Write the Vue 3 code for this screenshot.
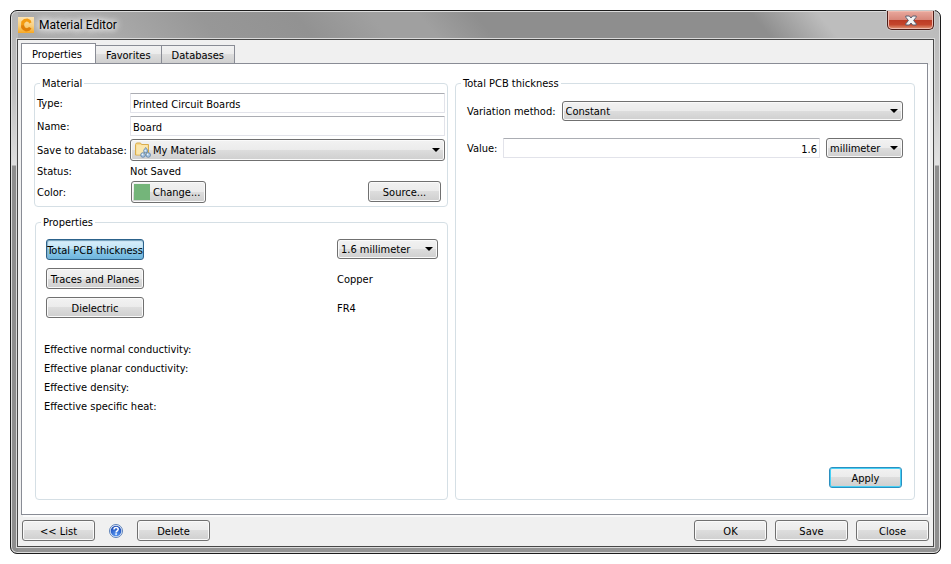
<script setup>
import { ref } from 'vue'

const tabs = ['Properties', 'Favorites', 'Databases']
const activeTab = ref('Properties')

const type = ref('Printed Circuit Boards')
const name = ref('Board')
const database = ref('My Materials')
const method = ref('Constant')
const value = ref('1.6')
const unit = ref('millimeter')
const thickness = ref('1.6 millimeter')

const selected = ref('Total PCB thickness')
const layers = [
  { label: 'Total PCB thickness', text: '' },
  { label: 'Traces and Planes', text: 'Copper' },
  { label: 'Dielectric', text: 'FR4' },
]
const results = [
  'Effective normal conductivity:',
  'Effective planar conductivity:',
  'Effective density:',
  'Effective specific heat:',
]
</script>

<template>
  <div class="desktop">
    <main class="window">
      <header class="titlebar">
        <svg class="app-icon" viewBox="0 0 16 16" aria-hidden="true">
          <defs>
            <linearGradient id="appBg" x1="0" y1="0" x2="0" y2="1">
              <stop offset="0" stop-color="#fbe3b4" />
              <stop offset="0.55" stop-color="#f9cf7c" />
              <stop offset="1" stop-color="#f7a823" />
            </linearGradient>
          </defs>
          <rect width="16" height="16" fill="url(#appBg)" />
          <path d="M13.500 5.500 12.500 3 9.500 1.500 6 2 3.300 4.500 3 9l3-.5L6.500 6l2-1.500L10.500 5l.5 1.500z" fill="#f39a10" />
          <path d="M3 8.500 6 8l1 2.500 2 .8 2.200-1.300 2.300 1.500-2 2.200-3.500.8L5 13 3.200 11z" fill="#e07f08" />
        </svg>
        <h1 class="title">Material Editor</h1>
        <button class="close" type="button" aria-label="Close window">
          <svg viewBox="0 0 12 11" width="12" height="11" aria-hidden="true">
            <path d="M.8 1h3.600L6 3l1.600-2h3.600v1.200L8.600 5.500l2.600 3.300V10H7.600L6 8l-1.600 2H.8V8.800l2.600-3.300L.8 2.200z" fill="#f4f4f4" stroke="#5b5f70" />
          </svg>
        </button>
      </header>

      <div class="client">
        <nav class="tabs" role="tablist">
          <button
            v-for="tab in tabs"
            :key="tab"
            type="button"
            role="tab"
            class="tab"
            :class="{ active: tab === activeTab }"
            :aria-selected="tab === activeTab"
            @click="activeTab = tab"
          >{{ tab }}</button>
        </nav>

        <section class="pane">
          <div class="left">
            <fieldset class="group material">
              <legend>Material</legend>
              <label class="text" for="type">Type:</label>
              <input id="type" v-model="type" class="field" type="text" />
              <label class="text" for="name">Name:</label>
              <input id="name" v-model="name" class="field" type="text" />
              <label class="text" for="database">Save to database:</label>
              <div class="combo tall with-icon">
                <select id="database" v-model="database"><option>My Materials</option></select>
                <svg class="folder" viewBox="0 0 16 16" aria-hidden="true">
                  <path d="M.5 13V2.500L1.500 1h4l1 1.500h7v10.500z" fill="#f8d98a" stroke="#d9ac4c" />
                  <path d="M1.500 5h11v7.500h-11z" fill="#fbe7ae" />
                  <path d="M1.500 4h11" stroke="#fff3cf" />
                  <g fill="#a9c6e2" stroke="#5b7fa6" stroke-width=".8">
                    <path d="M10.700 5.500c1 1.500 2 2.300 2 3.400a2 2 0 0 1-4 0c0-1.100 1-1.900 2-3.400z" />
                    <circle cx="8" cy="13" r="2.300" />
                    <circle cx="13.200" cy="13" r="2.300" />
                  </g>
                  <g fill="#eef6fd">
                    <circle cx="10.200" cy="8.800" r=".8" />
                    <circle cx="7.400" cy="12.400" r=".8" />
                    <circle cx="12.600" cy="12.400" r=".8" />
                  </g>
                </svg>
                <span class="arrow"></span>
              </div>
              <span class="text">Status:</span>
              <span class="text">Not Saved</span>
              <span class="text">Color:</span>
              <div class="color-row">
                <button class="btn change" type="button"><i class="swatch"></i><span class="text">Change...</span></button>
                <button class="btn" type="button">Source...</button>
              </div>
            </fieldset>

            <fieldset class="group properties">
              <legend>Properties</legend>
              <div class="layers">
                <template v-for="layer in layers" :key="layer.label">
                  <button
                    type="button"
                    class="btn wide"
                    :class="{ pressed: layer.label === selected }"
                    @click="selected = layer.label"
                  >{{ layer.label }}</button>
                  <span v-if="layer.text" class="text">{{ layer.text }}</span>
                  <div v-else class="combo">
                    <select v-model="thickness" aria-label="Thickness"><option>1.6 millimeter</option></select>
                    <span class="arrow"></span>
                  </div>
                </template>
              </div>
              <ul class="results">
                <li v-for="item in results" :key="item">{{ item }}</li>
              </ul>
            </fieldset>
          </div>

          <fieldset class="group detail">
            <legend>Total PCB thickness</legend>
            <div class="detail-body">
              <div class="row">
                <label class="text" for="method">Variation method:</label>
                <div class="combo grow">
                  <select id="method" v-model="method"><option>Constant</option></select>
                  <span class="arrow"></span>
                </div>
              </div>
              <div class="row">
                <label class="text" for="value">Value:</label>
                <input id="value" v-model="value" class="field number" type="text" />
                <div class="combo unit">
                  <select v-model="unit" aria-label="Unit"><option>millimeter</option></select>
                  <span class="arrow"></span>
                </div>
              </div>
              <button class="btn apply" type="button">Apply</button>
            </div>
          </fieldset>
        </section>

        <footer class="footer">
          <button class="btn" type="button">&lt;&lt; List</button>
          <button class="help" type="button" aria-label="Help">
            <svg viewBox="0 0 14 14" width="14" height="14" aria-hidden="true">
              <defs>
                <radialGradient id="helpBg" cx=".5" cy=".85" r=".8">
                  <stop offset="0" stop-color="#5b9bf5" />
                  <stop offset="1" stop-color="#1747b5" />
                </radialGradient>
              </defs>
              <circle cx="7" cy="7" r="6.500" fill="#e8f0fb" stroke="#5c80b8" />
              <circle cx="7" cy="7" r="5.300" fill="url(#helpBg)" />
              <path d="M5 5.600C5 4.200 5.900 3.500 7.100 3.500s2.100.7 2.100 1.800c0 1.500-2.100 1.500-2.100 3.100" fill="none" stroke="#fff" stroke-width="1.500" />
              <rect x="6.300" y="9.300" width="1.600" height="1.500" fill="#fff" />
            </svg>
          </button>
          <button class="btn" type="button">Delete</button>
          <span class="spacer"></span>
          <button class="btn" type="button">OK</button>
          <button class="btn" type="button">Save</button>
          <button class="btn" type="button">Close</button>
        </footer>
      </div>
    </main>
  </div>
</template>

<style>
body {
  background: #fff;
}
</style>

<style scoped>
* {
  box-sizing: border-box;
}

.desktop {
  display: flex;
  min-height: 100vh;
  padding: 10px;
  font: 11px/14px "DejaVu Sans Condensed", Tahoma, sans-serif;
  color: #000;
}

button,
input,
select {
  margin: 0;
  font: inherit;
  color: inherit;
}

.text {
  padding-top: 2px;
}

.window {
  flex: 1;
  display: flex;
  flex-direction: column;
  padding: 0 6px 6px;
  border: 1px solid #1c1c1c;
  border-radius: 7px;
  background:
    linear-gradient(to bottom, #b9b9b9 0, #c4c4c4 80px, #e2e2e2 154px, #8e8e8e 155px, #8e8e8e 100%) right / 7px 100% no-repeat,
    linear-gradient(to bottom, #b4b4b4 0, #c0c0c0 80px, #dedede 154px, #8e8e8e 155px, #8e8e8e 100%) left / 7px 100% no-repeat,
    linear-gradient(50deg, #a8a8a8 0, #b0b0b0 8%, #979797 22%, #929292 32%, #a0a0a0 40%, #a0a0a0 45%, #8e8e8e 51%, #8e8e8e 80%, #bdbdbd 87%, #bdbdbd 100%) top / 100% 30px no-repeat,
    #949494;
  box-shadow: inset 0 0 0 1px #dcdcdc;
}

.titlebar {
  display: flex;
  align-items: flex-start;
  height: 28px;
  padding-left: 1px;
}

.app-icon {
  width: 16px;
  height: 16px;
  margin-top: 6px;
}

.title {
  flex: 1;
  margin: 0 0 0 5px;
  font: 12px/28px Roboto, sans-serif;
  text-shadow: 0 0 6px #fff, 0 0 8px #fff, 0 0 10px #fff;
}

.close {
  display: grid;
  place-items: center;
  width: 47px;
  height: 19px;
  padding: 0;
  border: 1px solid #4b1d18;
  border-top: 0;
  border-radius: 0 0 5px 5px;
  background: linear-gradient(#e9a99e 0, #d8887b 48%, #bb3a24 50%, #c4452c 75%, #e09a7a 100%);
  box-shadow: inset 0 0 0 1px #f0b9ad, 0 0 0 1px #c9c9c9;
}

.client {
  flex: 1;
  display: flex;
  flex-direction: column;
  padding: 3px 5px 5px 3px;
  border: 1px solid #474747;
  background: #f0f0f0;
  box-shadow: 0 0 0 1px #dadada;
}

.tabs {
  display: flex;
  align-items: flex-end;
  height: 20px;
}

.tab {
  height: 18px;
  padding: 2px 10px 0;
  border: 1px solid #898c95;
  border-left-width: 0;
  border-bottom: 0;
  background: linear-gradient(#f2f2f2 0, #ebebeb 50%, #dddddd 50%, #cfcfcf 100%);
}

.tab.active {
  height: 21px;
  margin-bottom: -1px;
  padding: 1px 13px 0 10px;
  border-left-width: 1px;
  background: #fff;
}

.pane {
  flex: 1;
  display: grid;
  grid-template-columns: 414fr 460fr;
  gap: 7px;
  padding: 11px 12px 14px 12px;
  border: 1px solid #898c95;
  background: #fff;
  box-shadow: 2px 2px 0 #fbfbfb;
}

.left {
  display: flex;
  flex-direction: column;
  gap: 7px;
}

.group {
  min-width: 0;
  margin: 0;
  border: 1px solid #d5dfe5;
  border-radius: 4px;
}

legend {
  margin-left: 5px;
  padding: 2px 2px 0;
}

.material {
  display: grid;
  grid-template-columns: 93px 1fr;
  grid-template-rows: 20px 20px 22px 14px 22px;
  align-items: center;
  row-gap: 3px;
  padding: 2px 2px 3px;
}

.material legend {
  margin-left: 3px;
}

.field {
  width: 100%;
  height: 20px;
  padding: 2px 2px 0;
  border: 1px solid #e2e3ea;
  border-top-color: #abadb3;
  border-radius: 1px;
  background: #fff;
  outline: none;
}

.combo {
  display: grid;
  align-items: center;
  height: 20px;
}

.combo.tall {
  height: 22px;
}

.combo > * {
  grid-area: 1 / 1;
}

.combo select {
  width: 100%;
  height: 100%;
  padding: 1px 20px 0 3px;
  appearance: none;
}

.combo.with-icon select {
  padding-left: 22px;
}

.combo select,
.btn {
  border: 1px solid #707070;
  border-radius: 3px;
  background: linear-gradient(#f2f2f2 0, #ebebeb 50%, #dddddd 50%, #cfcfcf 100%);
  box-shadow: inset 0 0 0 1px #fafafa;
}

.folder {
  width: 16px;
  height: 16px;
  margin-left: 5px;
  pointer-events: none;
}

.arrow {
  justify-self: end;
  width: 8px;
  height: 4px;
  margin-right: 5px;
  background: #000;
  clip-path: polygon(0 0, 100% 0, 50% 100%);
  pointer-events: none;
}

.btn {
  width: 73px;
  height: 21px;
  padding: 2px 0 0;
  white-space: nowrap;
}

.btn.wide {
  width: 98px;
}

.btn.pressed {
  border-color: #2c628b;
  background: linear-gradient(#d9effb 0, #c1e4f6 48%, #8fcbea 50%, #6cb4dd 100%);
  box-shadow: inset 0 1px 1px #6f9db8, inset 1px 0 1px #8ab5cd;
}

.color-row {
  display: flex;
  justify-content: space-between;
  padding: 0 4px 0 1px;
}

.btn.change {
  display: flex;
  align-items: center;
  gap: 3px;
  width: 75px;
  height: 22px;
  padding: 0 0 0 2px;
}

.swatch {
  width: 16px;
  height: 16px;
  background: #74b57a;
}

.properties {
  flex: 1;
  margin-left: 1px;
  padding: 9px 9px 0 8px;
}

.properties legend {
  margin-left: -3px;
}

.layers {
  display: grid;
  grid-template-columns: 1fr 101px;
  row-gap: 8px;
  align-items: center;
  padding-left: 2px;
}

.layers .combo {
  align-self: start;
}

.results {
  margin: 22px 0 0;
  padding: 0;
  line-height: 19px;
  list-style: none;
}

.detail {
  display: flex;
  padding: 10px 11px 11px;
}

.detail legend {
  margin-left: -6px;
}

.detail-body {
  flex: 1;
  display: flex;
  flex-direction: column;
  gap: 17px;
}

.row {
  display: flex;
  align-items: center;
  gap: 6px;
}

.grow {
  flex: 1;
}

.unit {
  flex: 0 0 77px;
}

.number {
  flex: 1;
  min-width: 0;
  text-align: right;
}

.apply {
  align-self: flex-end;
  margin: auto 1px 0 0;
  border-color: #2b8fc0;
  box-shadow: inset 0 0 0 1px #46d0f5;
}

.footer {
  display: flex;
  align-items: center;
  gap: 8px;
  margin: 5px -1px 0 1px;
}

.help {
  display: grid;
  place-items: center;
  width: 14px;
  height: 14px;
  margin: 0 6px;
  padding: 0;
  border: 0;
  background: none;
}

.spacer {
  flex: 1;
}
</style>
